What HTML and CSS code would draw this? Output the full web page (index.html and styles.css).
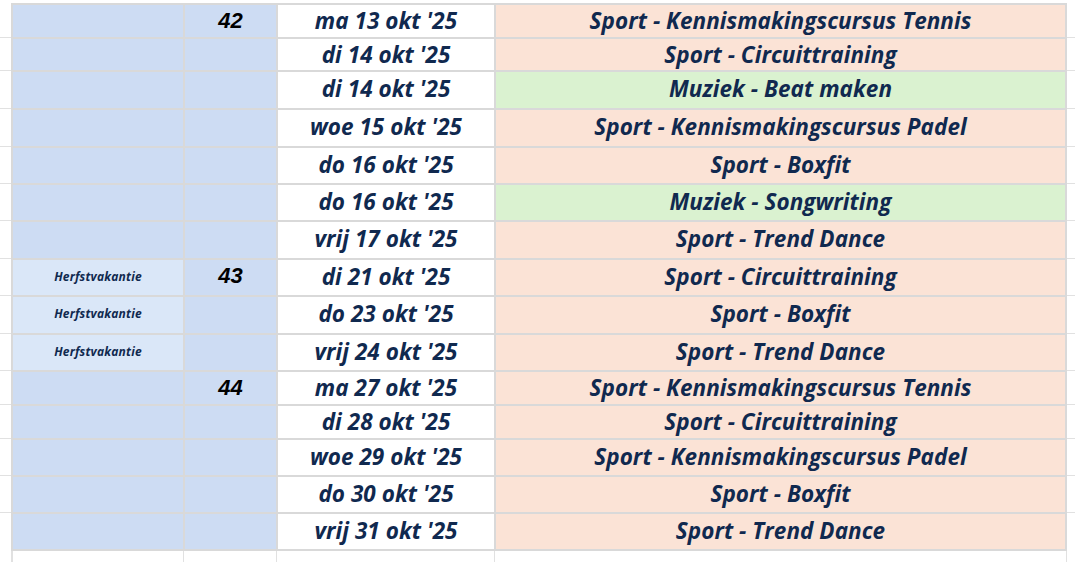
FILE: index.html
```html
<!DOCTYPE html>
<html lang="nl">
<head>
<meta charset="utf-8">
<title>Planning oktober</title>
<link rel="stylesheet" href="styles.css">
</head>
<body>
<div class="sheet">
  <div class="row top h34"><div class="stub"></div><div class="cell a"></div><div class="cell b">42</div><div class="cell c">ma 13 okt '25</div><div class="cell d sport">Sport - Kennismakingscursus Tennis</div><div class="stub r"></div></div>
  <div class="row h33"><div class="stub"></div><div class="cell a"></div><div class="cell b"></div><div class="cell c">di 14 okt '25</div><div class="cell d sport">Sport - Circuittraining</div><div class="stub r"></div></div>
  <div class="row h38"><div class="stub"></div><div class="cell a"></div><div class="cell b"></div><div class="cell c">di 14 okt '25</div><div class="cell d muziek">Muziek - Beat maken</div><div class="stub r"></div></div>
  <div class="row h38"><div class="stub"></div><div class="cell a"></div><div class="cell b"></div><div class="cell c">woe 15 okt '25</div><div class="cell d sport">Sport - Kennismakingscursus Padel</div><div class="stub r"></div></div>
  <div class="row h37"><div class="stub"></div><div class="cell a"></div><div class="cell b"></div><div class="cell c">do 16 okt '25</div><div class="cell d sport">Sport - Boxfit</div><div class="stub r"></div></div>
  <div class="row h37"><div class="stub"></div><div class="cell a"></div><div class="cell b"></div><div class="cell c">do 16 okt '25</div><div class="cell d muziek">Muziek - Songwriting</div><div class="stub r"></div></div>
  <div class="row h38"><div class="stub"></div><div class="cell a"></div><div class="cell b"></div><div class="cell c">vrij 17 okt '25</div><div class="cell d sport">Sport - Trend Dance</div><div class="stub r"></div></div>
  <div class="row h37"><div class="stub"></div><div class="cell a vak">Herfstvakantie</div><div class="cell b">43</div><div class="cell c">di 21 okt '25</div><div class="cell d sport">Sport - Circuittraining</div><div class="stub r"></div></div>
  <div class="row h38"><div class="stub"></div><div class="cell a vak">Herfstvakantie</div><div class="cell b"></div><div class="cell c">do 23 okt '25</div><div class="cell d sport">Sport - Boxfit</div><div class="stub r"></div></div>
  <div class="row h37"><div class="stub"></div><div class="cell a vak">Herfstvakantie</div><div class="cell b"></div><div class="cell c">vrij 24 okt '25</div><div class="cell d sport">Sport - Trend Dance</div><div class="stub r"></div></div>
  <div class="row h34"><div class="stub"></div><div class="cell a"></div><div class="cell b">44</div><div class="cell c">ma 27 okt '25</div><div class="cell d sport">Sport - Kennismakingscursus Tennis</div><div class="stub r"></div></div>
  <div class="row h34"><div class="stub"></div><div class="cell a"></div><div class="cell b"></div><div class="cell c">di 28 okt '25</div><div class="cell d sport">Sport - Circuittraining</div><div class="stub r"></div></div>
  <div class="row h37"><div class="stub"></div><div class="cell a"></div><div class="cell b"></div><div class="cell c">woe 29 okt '25</div><div class="cell d sport">Sport - Kennismakingscursus Padel</div><div class="stub r"></div></div>
  <div class="row h37"><div class="stub"></div><div class="cell a"></div><div class="cell b"></div><div class="cell c">do 30 okt '25</div><div class="cell d sport">Sport - Boxfit</div><div class="stub r"></div></div>
  <div class="row h37 last"><div class="stub"></div><div class="cell a"></div><div class="cell b"></div><div class="cell c">vrij 31 okt '25</div><div class="cell d sport">Sport - Trend Dance</div><div class="stub r"></div></div>
  <div class="row filler"><div class="stub"></div><div class="cell a"></div><div class="cell b"></div><div class="cell c"></div><div class="cell d"></div><div class="stub r"></div></div>
</div>
</body>
</html>
```
FILE: styles.css
```css
html, body {
  margin: 0;
  padding: 0;
  background: #ffffff;
  overflow: hidden;
}

.sheet {
  padding-top: 3px;
  width: 1075px;
}

.row {
  display: grid;
  grid-template-columns: 11px 172px 93px 218px 573px 1fr;
  box-sizing: border-box;
}

.h33 { height: 33px; }
.h34 { height: 34px; }
.h37 { height: 37px; }
.h38 { height: 38px; }
.last { height: 39px; }

.stub {
  border-top: 1px solid #e1e1e1;
}
.top .stub { border-top-color: transparent; }

.cell {
  box-sizing: border-box;
  border-top: 2px solid #d9d9d9;
  border-left: 2px solid #d9d9d9;
  display: flex;
  align-items: center;
  justify-content: center;
  font-family: "Open Sans", "Liberation Sans", sans-serif;
  font-weight: 700;
  font-style: italic;
  color: #10294f;
  font-size: 22.5px;
  letter-spacing: 0.05px;
  white-space: nowrap;
  padding-bottom: 3px;
}

.last .cell { border-bottom: 2px solid #d9d9d9; }

.cell.d { border-right: 2px solid #d9d9d9; }

.a { background: #cddcf3; }
.b {
  background: #cddcf3;
  font-family: "Liberation Sans", Arial, sans-serif;
  color: #000000;
  font-size: 22px;
  letter-spacing: 0;
}
.c { background: #ffffff; }

.a.vak {
  background: #dae7f8;
  font-size: 12px;
  letter-spacing: 0.2px;
}

.sport { background: #fbe3d6; }
.muziek { background: #daf2d0; }

.filler { height: 20px; }
.filler .stub { border-top: none; }
.filler .cell {
  background: transparent;
  border-top: none;
  border-left: 1px solid #e1e1e1;
}
.filler .cell.a { border-left: 2px solid #e1e1e1; }
.filler .cell.d { border-right: 1px solid #e1e1e1; }
```
